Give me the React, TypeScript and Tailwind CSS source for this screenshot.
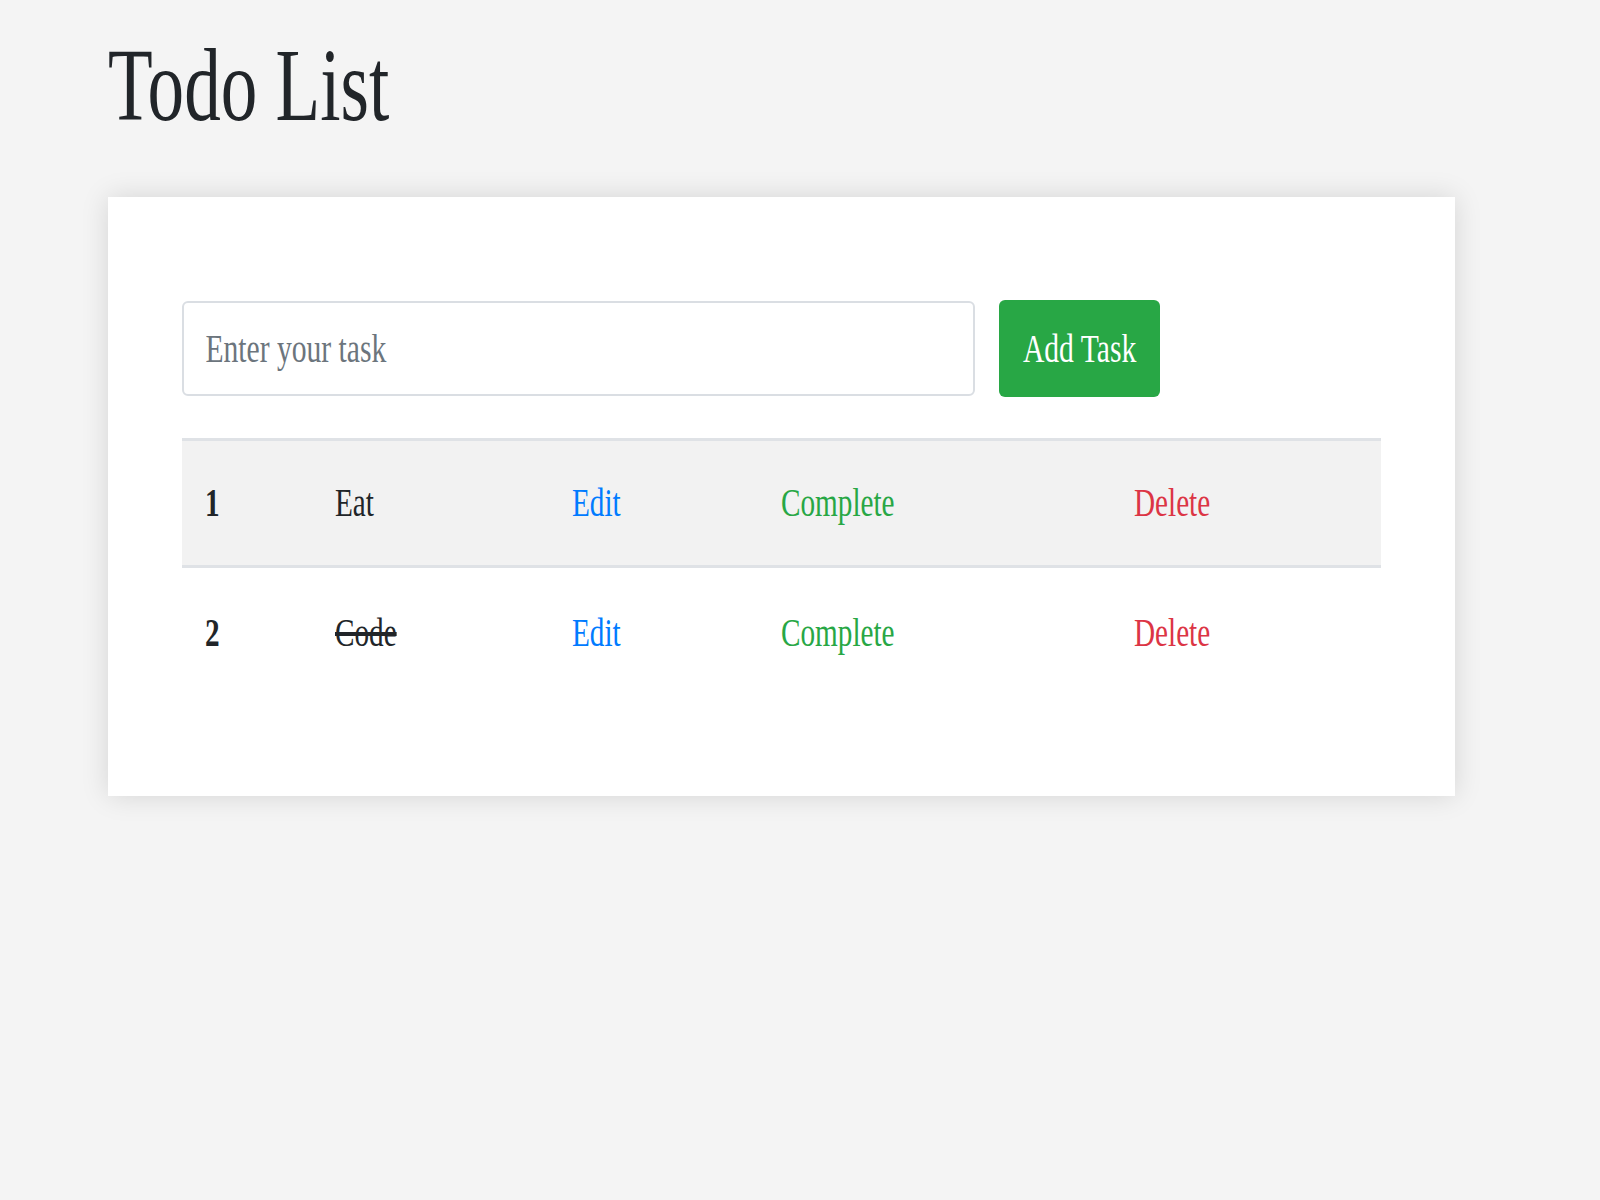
import { useState } from 'react';

type Task = { id: number; text: string; done: boolean };

const initialTasks: Task[] = [
  { id: 1, text: 'Eat', done: false },
  { id: 2, text: 'Code', done: true },
];

// the reference text is drawn narrow, so every label gets the same horizontal squeeze
// (padding is squeezed too, hence 31.5px -> ~23px on screen)
const cell = 'origin-left scale-x-[0.73] whitespace-nowrap pl-[31.5px]';

export default function App() {
  const [tasks] = useState<Task[]>(initialTasks);
  const [value, setValue] = useState('');

  return (
    <main className="min-h-[1200px] bg-[#f4f4f4] pl-[108px] pt-[34px] font-['Liberation_Serif','Times_New_Roman',serif] text-[#212529]">
      <h1 className="mb-[60px] h-[103px] origin-left scale-x-[0.71] whitespace-nowrap text-[103px] leading-none font-normal">
        Todo List
      </h1>

      <section className="w-[1347px] bg-white px-[74px] pb-[97px] pt-[103px] shadow-[0_0_26px_rgba(0,0,0,0.13)]">
        <div className="flex items-center gap-[24px]">
          <div className="h-[95px] w-[793px] overflow-hidden rounded-[6px] border-2 border-[#dadee3] bg-white">
            <input
              value={value}
              onChange={(e) => setValue(e.target.value)}
              placeholder="Enter your task"
              className="h-full w-[136%] origin-left scale-x-[0.74] bg-transparent pl-[29px] text-[40px] text-[#212529] outline-none placeholder:text-[#6c757d]"
            />
          </div>
          <button className="flex h-[97px] w-[161px] items-center justify-center rounded-[6px] bg-[#28a745] text-white">
            <span className="inline-block origin-center scale-x-[0.74] whitespace-nowrap text-[40px] leading-none">Add Task</span>
          </button>
        </div>

        <div className="mt-[41px]">
          {tasks.map((task, i) => (
            <div
              key={task.id}
              className={
                i === 0
                  ? 'grid h-[130px] grid-cols-[130px_237px_209px_353px_1fr] items-center border-y-[3px] border-[#dfe2e6] bg-[#f2f2f2] text-[40px]'
                  : 'grid h-[131px] grid-cols-[130px_237px_209px_353px_1fr] items-center pb-[1px] text-[40px]'
              }
            >
              <div className={`font-bold ${cell}`}>{task.id}</div>
              <div className={`${cell} ${task.done ? 'line-through' : ''}`}>{task.text}</div>
              <div className={`text-[#007bff] ${cell}`}>Edit</div>
              <div className={`text-[#28a745] ${cell}`}>Complete</div>
              <div className={`text-[#dc3545] ${cell}`}>Delete</div>
            </div>
          ))}
        </div>
      </section>
    </main>
  );
}
